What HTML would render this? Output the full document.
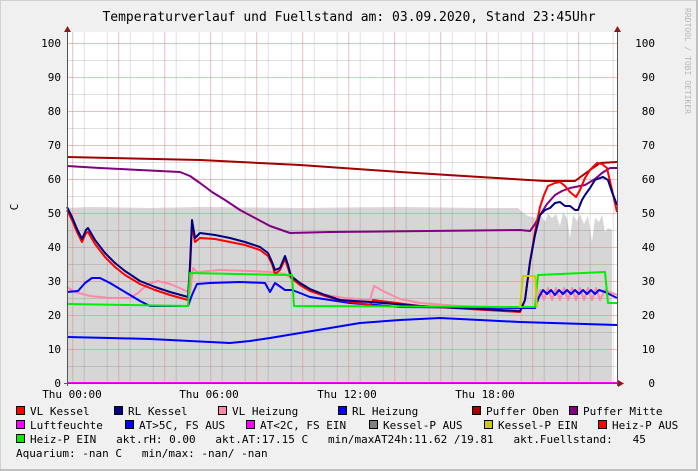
<!DOCTYPE html>
<html><head><meta charset="utf-8"><style>
body{margin:0;background:#f0f0f0}
svg{display:block}
text{font-family:"DejaVu Sans Mono","Liberation Mono",monospace;font-size:11px;fill:#000}
</style></head><body>
<svg width="698" height="471" viewBox="0 0 698 471" xmlns="http://www.w3.org/2000/svg">
<rect x="0" y="0" width="698" height="471" fill="#f0f0f0"/>
<rect x="0.5" y="0.5" width="697" height="470" fill="none" stroke="#d0d0d0"/>
<rect x="696" y="0" width="2" height="471" fill="#c0c0c0"/>
<rect x="0" y="469" width="698" height="2" fill="#c0c0c0"/>
<text x="349" y="21" text-anchor="middle" style="font-size:13px">Temperaturverlauf und Fuellstand am: 03.09.2020, Stand 23:45Uhr</text>
<text transform="translate(685,8) rotate(90)" style="font-size:8px;fill:#b8b8b8">RRDTOOL / TOBI OETIKER</text>
<rect x="67" y="32" width="550" height="351" fill="#fff"/>
<path d="M67,383 L67,208 L90,207 L150,208 L200,207 L300,208 L400,207 L480,208 L518,208 L522,212 L528,216 L535,218 L540,214 L545,222 L548,213 L552,218 L556,214 L560,226 L563,212 L567,218 L570,238 L573,215 L577,221 L580,214 L584,224 L588,216 L592,242 L595,218 L599,222 L602,215 L605,232 L608,228 L612,230 L612,383 Z" fill="#d6d6d6"/>
<g stroke-width="1">
<g stroke="#000" stroke-opacity="0.12">
<path d="M84.2,32V383M107.2,32V383M130.2,32V383M153.2,32V383M176.2,32V383M199.2,32V383M222.2,32V383M245.2,32V383M268.2,32V383M291.2,32V383M314.2,32V383M337.2,32V383M360.2,32V383M383.2,32V383M406.2,32V383M429.2,32V383M452.2,32V383M475.2,32V383M498.2,32V383M521.2,32V383M544.2,32V383M567.2,32V383M590.2,32V383M613.2,32V383"/>
<path d="M67,60.5H617M67,94.5H617M67,128.5H617M67,162.5H617M67,196.5H617M67,230.5H617M67,264.5H617M67,298.5H617M67,332.5H617M67,366.5H617"/>
</g>
<g stroke="#e08080" stroke-opacity="0.5">
<path d="M72.7,32V383M118.7,32V383M164.7,32V383M210.7,32V383M256.7,32V383M302.7,32V383M348.7,32V383M394.7,32V383M440.7,32V383M486.7,32V383M532.7,32V383M578.7,32V383"/>
<path d="M67,43.5H617M67,77.5H617M67,111.5H617M67,145.5H617M67,179.5H617M67,213.5H617M67,247.5H617M67,281.5H617M67,315.5H617M67,349.5H617"/>
</g>
</g>
<g fill="none" stroke-width="2" stroke-linejoin="round">
<polyline stroke="#0000ff" points="67,337 110,338 150,339 190,341 230,343 250,341 270,338 300,333 330,328 360,323 400,320 440,318 480,320 520,322 617,325"/>
<polyline stroke="#a00000" points="67,157 200,160 300,165 400,172 480,177 545,181 575,181 590,170 600,163 617,162"/>
<polyline stroke="#800080" points="67,166 100,168 180,172 190,176 200,183 212,192 225,200 240,210 255,218 270,226 290,233 330,232 520,230 530,231 535,224 540,215 547,204 555,195 562,191 570,188 585,185 595,179 602,173 610,168 617,168"/>
<polyline stroke="#ff88aa" points="67,287 75,292 90,296 110,298 130,298 138,293 148,284 158,281 170,284 182,289 190,293 193,268 197,272 220,270 250,271 270,272 285,274 295,280 305,287 320,294 345,298 370,300 374,286 385,292 400,299 420,303 460,306 520,308 535,308 540,290 544,300 548,288 552,300 556,288 560,300 564,288 568,300 572,288 576,300 580,288 584,300 588,288 592,300 596,288 600,300 605,290 617,295"/>
<polyline stroke="#0000ff" points="67,292 78,291 85,283 92,278 100,278 110,283 125,292 140,301 150,306 188,306 192,295 197,284 210,283 240,282 265,283 270,292 275,283 285,290 292,290 300,293 310,297 330,300 350,303 400,307 520,308 535,308 539,297 543,290 547,294 551,290 555,295 559,290 563,294 567,290 571,294 575,290 579,294 583,290 587,294 591,290 595,294 599,290 605,292 617,298"/>
<polyline stroke="#ff0000" points="67,210 72,220 77,232 82,242 86,233 88,232 95,244 105,257 115,267 125,275 140,284 155,290 170,295 188,300 190,270 192,225 195,242 200,238 215,239 230,242 245,245 260,250 268,256 272,264 275,274 280,270 285,259 288,268 291,278 300,285 310,291 325,296 340,300 370,305 373,300 420,306 520,312 525,300 530,262 535,232 540,207 544,195 548,186 555,183 560,182 565,186 570,192 576,197 580,190 585,178 590,170 597,163 602,164 607,168 612,190 617,212"/>
<polyline stroke="#000080" points="67,207 72,217 77,229 82,239 86,230 88,228 95,240 105,253 115,263 125,271 140,281 155,287 170,292 188,297 190,265 192,220 195,238 200,233 215,235 230,238 245,242 260,247 268,253 272,262 275,270 280,268 285,256 288,265 291,276 300,283 310,289 325,295 340,300 370,302 420,306 520,311 525,300 530,262 535,235 540,215 545,210 550,208 555,203 560,202 565,206 570,206 575,210 578,210 582,200 585,195 590,188 595,180 600,178 603,177 608,180 612,192 617,205"/>
<polyline stroke="#00ee00" points="67,304 188,306 190,273 285,275 292,275 294,306 520,307 535,307 538,275 605,272 608,303 617,303"/>
<polyline stroke="#cccc00" points="520,308 523,276 535,276 537,307"/>
<polyline stroke="#ff00ff" points="67,383 617,383"/>
</g>
<path d="M67.5,30V386" stroke="#555" stroke-width="1"/>
<path d="M617.5,30V386" stroke="#555" stroke-width="1"/>
<path d="M64,383.5H619" stroke="#555" stroke-width="1"/>
<path d="M64,32 L71,32 L67.5,26Z" fill="#8b1a1a"/>
<path d="M614,32 L621,32 L617.5,26Z" fill="#8b1a1a"/>
<path d="M618,380 L618,387 L624,383.5Z" fill="#8b1a1a"/>
<g text-anchor="end">
<text x="61" y="47">100</text><text x="61" y="81">90</text><text x="61" y="115">80</text><text x="61" y="149">70</text><text x="61" y="183">60</text><text x="61" y="217">50</text><text x="61" y="251">40</text><text x="61" y="285">30</text><text x="61" y="319">20</text><text x="61" y="353">10</text><text x="61" y="387">0</text>
<text x="655" y="47">100</text><text x="655" y="81">90</text><text x="655" y="115">80</text><text x="655" y="149">70</text><text x="655" y="183">60</text><text x="655" y="217">50</text><text x="655" y="251">40</text><text x="655" y="285">30</text><text x="655" y="319">20</text><text x="655" y="353">10</text><text x="655" y="387">0</text>
</g>
<text transform="translate(18,207) rotate(-90)" text-anchor="middle">C</text>
<g text-anchor="middle"><text x="72" y="398">Thu 00:00</text><text x="209" y="398">Thu 06:00</text><text x="347" y="398">Thu 12:00</text><text x="485" y="398">Thu 18:00</text></g>
<g stroke="#000" stroke-width="1">
<rect x="16.5" y="406.5" width="8" height="8" fill="#ff0000"/>
<rect x="114.5" y="406.5" width="8" height="8" fill="#000080"/>
<rect x="218.5" y="406.5" width="8" height="8" fill="#ff88aa"/>
<rect x="338.5" y="406.5" width="8" height="8" fill="#0000ff"/>
<rect x="472.5" y="406.5" width="8" height="8" fill="#a00000"/>
<rect x="569.5" y="406.5" width="8" height="8" fill="#800080"/>
<rect x="16.5" y="420.5" width="8" height="8" fill="#ff00ff"/>
<rect x="125.5" y="420.5" width="8" height="8" fill="#0000ff"/>
<rect x="246.5" y="420.5" width="8" height="8" fill="#ff00ff"/>
<rect x="369.5" y="420.5" width="8" height="8" fill="#808080"/>
<rect x="484.5" y="420.5" width="8" height="8" fill="#cccc00"/>
<rect x="598.5" y="420.5" width="8" height="8" fill="#ff0000"/>
<rect x="16.5" y="434.5" width="8" height="8" fill="#00ee00"/>
</g>
<g>
<text x="30" y="415">VL Kessel</text><text x="128" y="415">RL Kessel</text><text x="232" y="415">VL Heizung</text><text x="352" y="415">RL Heizung</text><text x="486" y="415">Puffer Oben</text><text x="583" y="415">Puffer Mitte</text>
<text x="30" y="429">Luftfeuchte</text><text x="139" y="429">AT&gt;5C, FS AUS</text><text x="260" y="429">AT&lt;2C, FS EIN</text><text x="383" y="429">Kessel-P AUS</text><text x="498" y="429">Kessel-P EIN</text><text x="612" y="429">Heiz-P AUS</text>
<text x="30" y="443" xml:space="preserve">Heiz-P EIN   akt.rH: 0.00   akt.AT:17.15 C   min/maxAT24h:11.62 /19.81   akt.Fuellstand:   45</text>
<text x="16" y="457" xml:space="preserve">Aquarium: -nan C   min/max: -nan/ -nan</text>
</g>
</svg>
</body></html>
